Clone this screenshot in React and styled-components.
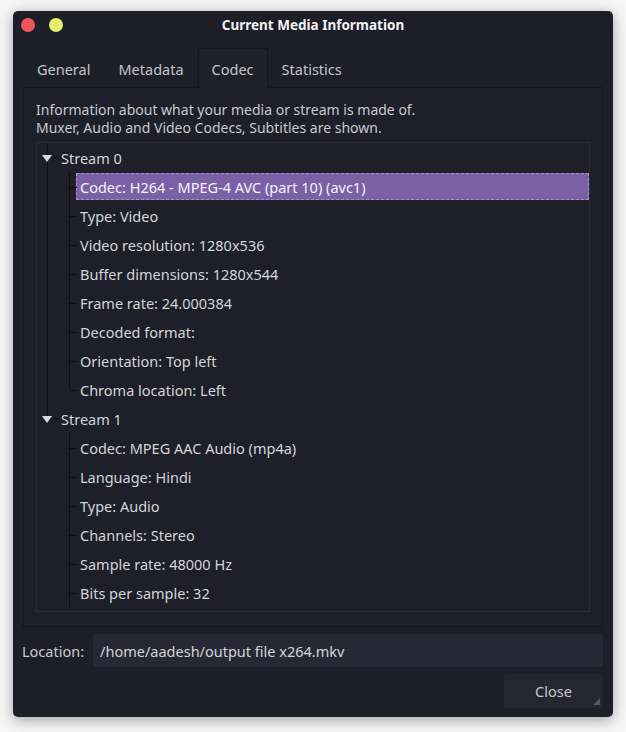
import React from "react";
import styled, { createGlobalStyle } from "styled-components";

const GlobalStyle = createGlobalStyle`
  body {
    margin: 0;
    background: #f6f6f6;
    font-family: "Noto Sans", "Open Sans", sans-serif;
  }
`;

const tabs = ["General", "Metadata", "Codec", "Statistics"];

const streams = [
  {
    name: "Stream 0",
    items: [
      "Codec: H264 - MPEG-4 AVC (part 10) (avc1)",
      "Type: Video",
      "Video resolution: 1280x536",
      "Buffer dimensions: 1280x544",
      "Frame rate: 24.000384",
      "Decoded format:",
      "Orientation: Top left",
      "Chroma location: Left",
    ],
  },
  {
    name: "Stream 1",
    items: [
      "Codec: MPEG AAC Audio (mp4a)",
      "Language: Hindi",
      "Type: Audio",
      "Channels: Stereo",
      "Sample rate: 48000 Hz",
      "Bits per sample: 32",
    ],
  },
];

const App = () => {
  return (
    <Page>
      <GlobalStyle />
      <Window>
        <TitleBar>
          <Lights>
            <Light $color="#f05656" />
            <Light $color="#e4ef6c" />
          </Lights>
          <Title>Current Media Information</Title>
          <span />
        </TitleBar>
        <Body>
          <TabBar>
            {tabs.map((t) => (
              <Tab key={t} $active={t === "Codec"}>
                {t}
              </Tab>
            ))}
          </TabBar>
          <Pane>
            <Description>
              <div>Information about what your media or stream is made of.</div>
              <div>Muxer, Audio and Video Codecs, Subtitles are shown.</div>
            </Description>
            <Tree>
              {streams.map((s, i) => {
                const lastGroup = i === streams.length - 1;
                return (
                  <Group key={s.name} $last={lastGroup}>
                    <StreamRow>
                      <Arrow />
                      <Dash />
                      {s.name}
                    </StreamRow>
                    {s.items.map((item, j) => (
                      <ChildRow
                        key={item}
                        $end={!lastGroup && j === s.items.length - 1}
                      >
                        <ChildLabel $selected={i === 0 && j === 0}>
                          {item}
                        </ChildLabel>
                      </ChildRow>
                    ))}
                  </Group>
                );
              })}
            </Tree>
          </Pane>
          <LocationRow>
            <LocationLabel>Location:</LocationLabel>
            <LocationField>/home/aadesh/output file x264.mkv</LocationField>
          </LocationRow>
          <Buttons>
            <CloseButton>Close</CloseButton>
          </Buttons>
        </Body>
      </Window>
    </Page>
  );
};

const Page = styled.div`
  width: 626px;
  height: 732px;
  padding: 11px 13px 0;
  box-sizing: border-box;
`;

const Window = styled.div`
  width: 600px;
  height: 706px;
  background: #1d1e28;
  border-radius: 5px;
  box-shadow: 0 3px 14px rgba(0, 0, 0, 0.35);
  display: flex;
  flex-direction: column;
  color: #cfcfd4;
`;

const TitleBar = styled.div`
  height: 28px;
  display: grid;
  grid-template-columns: 1fr auto 1fr;
  align-items: center;
`;

const Lights = styled.div`
  display: flex;
  gap: 14px;
  padding-left: 8px;
`;

const Light = styled.span`
  width: 14px;
  height: 14px;
  border-radius: 50%;
  background: ${(p) => p.$color};
`;

const Title = styled.div`
  font-size: 13.5px;
  font-weight: 700;
  color: #f2f2f4;
`;

const Body = styled.div`
  flex: 1;
  display: flex;
  flex-direction: column;
  padding: 9px 10px 9px 9px;
`;

const TabBar = styled.div`
  display: flex;
  padding-left: 1px;
  height: 39px;
`;

const Tab = styled.div`
  padding: 0 13px;
  display: flex;
  align-items: center;
  font-size: 14.5px;
  color: #c4c4ca;
  box-sizing: border-box;
  border: 1px solid ${(p) => (p.$active ? "#15161c" : "transparent")};
  border-bottom: none;
  background: ${(p) => (p.$active ? "#1f2029" : "transparent")};
  margin-bottom: -1px;
  position: relative;
`;

const Pane = styled.div`
  margin-left: 1px;
  height: 540px;
  box-sizing: border-box;
  border: 1px solid #16171d;
  background: #1e1f29;
  padding: 13px 12px 14px 12px;
  display: flex;
  flex-direction: column;
`;

const Description = styled.div`
  font-size: 14px;
  line-height: 18px;
  color: #c9c9cf;
  margin-bottom: 5px;
`;

const Tree = styled.div`
  flex: 1;
  border: 1px solid #2a2b35;
  padding-left: 5px;
  font-size: 14.5px;
  color: #d4d4d9;
  overflow: hidden;
`;

const Group = styled.div`
  position: relative;

  &::before {
    content: "";
    position: absolute;
    left: 5px;
    top: 0;
    width: 1px;
    height: ${(p) => (p.$last ? "14px" : "100%")};
    background: #0e0e13;
  }
`;

const StreamRow = styled.div`
  height: 29px;
  display: flex;
  align-items: center;
  position: relative;
`;

const Arrow = styled.span`
  width: 0;
  height: 0;
  border-left: 5px solid transparent;
  border-right: 5px solid transparent;
  border-top: 7px solid #d8d8dd;
  margin-top: 1px;
  position: relative;
  z-index: 1;
`;

const Dash = styled.span`
  width: 6px;
  height: 1px;
  background: #0e0e13;
  margin: 0 2px 0 1px;
`;

const ChildRow = styled.div`
  height: 29px;
  display: flex;
  align-items: center;
  padding-left: 34px;
  position: relative;

  &::before {
    content: "";
    position: absolute;
    left: 27px;
    top: 0;
    width: 1px;
    height: ${(p) => (p.$end ? "50%" : "100%")};
    background: #0e0e13;
  }

  &::after {
    content: "";
    position: absolute;
    left: 28px;
    top: 50%;
    width: 7px;
    height: 1px;
    background: #0e0e13;
  }
`;

const ChildLabel = styled.div`
  flex: 1;
  height: 27px;
  display: flex;
  align-items: center;
  padding-left: 3px;
  box-sizing: border-box;
  border: 1px dashed ${(p) => (p.$selected ? "#a98fd0" : "transparent")};
  background: ${(p) => (p.$selected ? "#7c60a6" : "transparent")};
  color: ${(p) => (p.$selected ? "#f4f2f8" : "inherit")};
`;

const LocationRow = styled.div`
  display: flex;
  align-items: center;
  gap: 9px;
  margin-top: 7px;
`;

const LocationLabel = styled.span`
  font-size: 14.5px;
  color: #c9c9cf;
`;

const LocationField = styled.div`
  flex: 1;
  height: 33px;
  display: flex;
  align-items: center;
  padding-left: 7px;
  background: #272833;
  border-radius: 3px;
  font-size: 14.5px;
  color: #d4d4d9;
`;

const Buttons = styled.div`
  display: flex;
  justify-content: flex-end;
  margin-top: 7px;
`;

const CloseButton = styled.button`
  width: 99px;
  height: 34px;
  background: #252630;
  border: none;
  border-radius: 3px;
  color: #c9c9cf;
  font-family: inherit;
  font-size: 14.5px;
  position: relative;

  &::after {
    content: "";
    position: absolute;
    right: 3px;
    bottom: 3px;
    border-left: 7px solid transparent;
    border-bottom: 7px solid #55565f;
  }
`;

export default App;
